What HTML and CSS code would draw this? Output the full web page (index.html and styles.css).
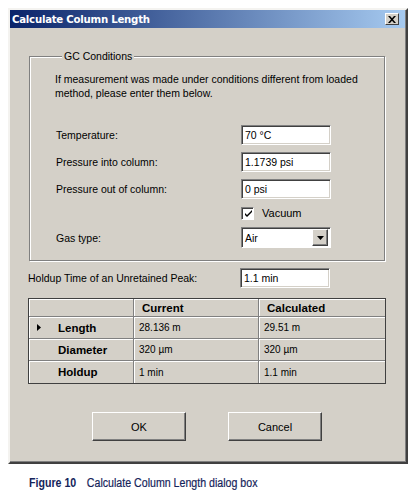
FILE: index.html
```html
<!DOCTYPE html>
<html lang="en">
<head>
<meta charset="utf-8">
<title>Calculate Column Length</title>
<link rel="stylesheet" href="styles.css">
</head>
<body>
<div class="dialog">
  <div class="titlebar">
    <span class="title">Calculate Column Length</span>
    <span class="close"><svg width="8" height="7" viewBox="0 0 8 7"><path d="M0 0h2l2 2.3L6 0h2L5 3.5 8 7H6L4 4.7 2 7H0l3-3.5z" fill="#000"/></svg></span>
  </div>
  <div class="body">
    <fieldset class="group">
      <legend>GC Conditions</legend>
      <p class="intro">If measurement was made under conditions different from loaded<br>method, please enter them below.</p>
      <div class="rows">
        <div class="row"><span class="label">Temperature:</span><span class="field">70 °C</span></div>
        <div class="row"><span class="label">Pressure into column:</span><span class="field">1.1739 psi</span></div>
        <div class="row"><span class="label">Pressure out of column:</span><span class="field">0 psi</span></div>
        <div class="row row-check">
          <span class="check"><svg width="9" height="9" viewBox="0 0 9 9"><path d="M1 4l2 2 5-5v2L3 8 1 6z" fill="#000"/></svg></span>
          <span class="check-label">Vacuum</span>
        </div>
        <div class="row row-select"><span class="label">Gas type:</span>
          <span class="select"><span class="select-value">Air</span><span class="select-btn"><svg width="7" height="4" viewBox="0 0 7 4"><path d="M0 0h7L3.5 4z" fill="#000"/></svg></span></span>
        </div>
      </div>
    </fieldset>
    <div class="row holdup"><span class="label">Holdup Time of an Unretained Peak:</span><span class="field">1.1 min</span></div>
    <div class="grid">
      <div class="cell head corner"></div>
      <div class="cell head">Current</div>
      <div class="cell head">Calculated</div>
      <div class="cell rowhead"><span class="marker"><svg width="4" height="7" viewBox="0 0 4 7"><path d="M0 0l4 3.5L0 7z" fill="#000"/></svg></span>Length</div>
      <div class="cell">28.136 m</div>
      <div class="cell">29.51 m</div>
      <div class="cell rowhead"><span class="marker"></span>Diameter</div>
      <div class="cell">320 µm</div>
      <div class="cell">320 µm</div>
      <div class="cell rowhead"><span class="marker"></span>Holdup</div>
      <div class="cell">1 min</div>
      <div class="cell">1.1 min</div>
    </div>
    <div class="buttons">
      <span class="btn">OK</span>
      <span class="btn">Cancel</span>
    </div>
  </div>
</div>
<p class="caption"><span class="fig">Figure 10</span><span class="cap-text">Calculate Column Length dialog box</span></p>
</body>
</html>
```
FILE: styles.css
```css
* { box-sizing: border-box; }

body {
  margin: 0;
  background: #fff;
  font-family: "Liberation Sans", Arial, sans-serif;
  font-size: 10.5px;
  color: #000;
}

.dialog {
  margin: 8px 0 0 8px;
  width: 400px;
  height: 456px;
  background: #d4d0c8;
  border: 2px solid;
  border-color: #f4f3f0 #404040 #404040 #f4f3f0;
  box-shadow: inset -1px -1px #808080;
  padding: 0 1px 0 0;
}

.titlebar {
  height: 18px;
  background: linear-gradient(to right, #0a246a, #a6caf0);
  display: flex;
  align-items: center;
  justify-content: space-between;
  padding: 0 6px 0 2px;
}

.title {
  color: #fff;
  font-family: "DejaVu Sans", Verdana, sans-serif;
  font-weight: bold;
  font-size: 10.2px;
  letter-spacing: -0.25px;
}

.close {
  width: 14px;
  height: 12px;
  background: #d4d0c8;
  border: 1px solid;
  border-color: #fff #404040 #404040 #fff;
  display: flex;
  align-items: center;
  justify-content: center;
}

.body {
  padding: 22px 0 0 19px;
}

.group {
  margin: 0;
  width: 356px;
  border: 1px solid #808080;
  box-shadow: inset 1px 1px #fff, 1px 1px #fff;
  padding: 0 0 12px 26px;
}

.group legend {
  padding: 0 2px;
  margin-left: 6px;
  line-height: 13px;
  background: #d4d0c8;
}

.intro {
  margin: 9px 0 0 -1px;
  line-height: 14px;
}

.rows {
  margin-top: 25px;
  display: flex;
  flex-direction: column;
  gap: 7px;
}

.row {
  display: flex;
  align-items: center;
  height: 20px;
}

.label {
  width: 185px;
  flex: none;
}

.field {
  width: 90px;
  height: 20px;
  background: #fff;
  border: 1px solid;
  border-color: #808080 #fff #fff #808080;
  box-shadow: inset 1px 1px #404040, inset -1px -1px #d4d0c8;
  padding: 0 3px;
  display: flex;
  align-items: center;
  line-height: 1;
}

.row-check {
  height: 18px;
  margin: -2px 0 -2px 185px;
}

.check {
  width: 13px;
  height: 13px;
  background: #fff;
  border: 1px solid;
  border-color: #808080 #fff #fff #808080;
  box-shadow: inset 1px 1px #404040;
  display: flex;
  align-items: center;
  justify-content: center;
  padding: 1px 0 0 1px;
}

.check-label {
  margin-left: 8px;
  font-size: 11px;
}

.row-select { height: 21px; }

.select {
  width: 90px;
  height: 21px;
  background: #fff;
  border: 1px solid;
  border-color: #808080 #fff #fff #808080;
  box-shadow: inset 1px 1px #404040;
  display: flex;
  align-items: center;
  justify-content: space-between;
  padding: 2px 2px 2px 3px;
}

.select-btn {
  width: 16px;
  height: 17px;
  background: #d4d0c8;
  border: 1px solid;
  border-color: #fff #404040 #404040 #fff;
  box-shadow: inset -1px -1px #808080;
  display: flex;
  align-items: center;
  justify-content: center;
}

.holdup {
  margin-top: 7px;
}

.holdup .label { width: 212px; margin-left: -1px; }

.grid {
  margin: 10px 0 0 -1px;
  width: 358px;
  display: grid;
  grid-template-columns: 105px 125px 126px;
  grid-template-rows: 18px 22px 22px 22px;
  border: 1px solid #404040;
  box-shadow: inset 1px 1px #808080;
  background: #d4d0c8;
}

.cell {
  border-right: 1px solid #808080;
  border-bottom: 1px solid #808080;
  box-shadow: inset 1px 1px #fff;
  display: flex;
  align-items: center;
  padding-left: 5px;
  font-size: 10px;
}

.cell:nth-child(3n) { border-right: 0; }
.cell:nth-last-child(-n+3) { border-bottom: 0; }

.head {
  font-weight: bold;
  font-size: 11.5px;
  padding-left: 8px;
}

.head.corner { padding: 0; }

.rowhead {
  font-weight: bold;
  font-size: 11.5px;
  padding-left: 8px;
}

.marker {
  width: 21px;
  display: flex;
  align-items: center;
}

.buttons {
  margin: 28px 0 0 63px;
  display: flex;
  gap: 42px;
}

.btn {
  width: 94px;
  height: 29px;
  border: 1px solid;
  border-color: #fff #404040 #404040 #fff;
  box-shadow: inset -1px -1px #808080;
  display: flex;
  align-items: center;
  justify-content: center;
  font-size: 11px;
}

/* condensed figure caption under the dialog */
.caption {
  margin: 12px 0 0 29px;
  line-height: 15px;
  color: #15245a;
  font-family: "Liberation Sans", Arial, sans-serif;
  font-size: 12.5px;
  display: flex;
  width: 300px;
  transform: scaleX(0.85);
  transform-origin: left center;
}

.fig {
  font-weight: bold;
  width: 68px;
}

.cap-text {
  -webkit-text-stroke: 0.2px #15245a;
}
```
